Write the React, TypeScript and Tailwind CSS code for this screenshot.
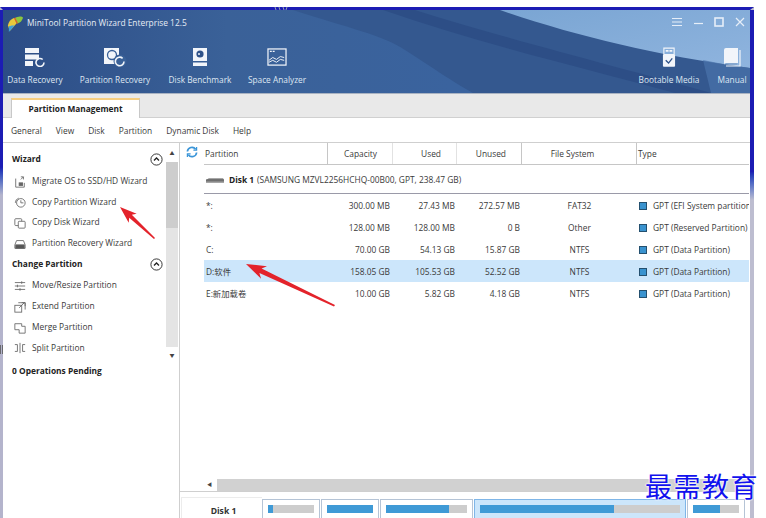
import React from "react";

const font = { fontFamily: '"Open Sans","Noto Sans CJK SC",sans-serif' };

const Ico = ({ d }: { d: React.ReactNode }) => (
  <svg width="12" height="12" viewBox="0 0 14 14" fill="none" stroke="#666" strokeWidth="1" className="shrink-0">{d}</svg>
);

const Chevron = () => (
  <svg width="13" height="13" viewBox="0 0 13 13" fill="none" stroke="#222" className="shrink-0">
    <circle cx="6.5" cy="6.5" r="5.6" strokeWidth="0.9" />
    <path d="M4 7.5l2.5-2.5 2.5 2.5" strokeWidth="1.3" />
  </svg>
);

const wizard: [string, React.ReactNode, string][] = [
  ["Migrate OS to SSD/HD Wizard", <><path d="M2 3v10h10V8" /><path d="M8 1l3 0 0 3M11 1L8 4" /><rect x="6" y="8" width="4" height="3" fill="#666" /></>, "h-[21px]"],
  ["Copy Partition Wizard", <><circle cx="8" cy="8" r="5" /><path d="M8 5v3h3M1.500 8a6 6 0 0 1 4-5.500" /></>, "h-[20px]"],
  ["Copy Disk Wizard", <><rect x="1" y="2" width="8" height="8" rx="1" /><rect x="5" y="5" width="8" height="8" rx="1" fill="#fff" /></>, "h-[21px]"],
  ["Partition Recovery Wizard", <><path d="M3 3h8l2 5v4H1V8z" /><rect x="2" y="8" width="10" height="4" fill="#555" /></>, "h-[21px]"],
];
const change: [string, React.ReactNode, string][] = [
  ["Move/Resize Partition", <><path d="M1 3h12M1 7h12M1 11h12" /><path d="M9 1.5v3M4 5.5v3M7 9.5v3" /></>, "h-[21px]"],
  ["Extend Partition", <><rect x="1" y="5" width="8" height="8" /><path d="M5 2h8v8M6 8l6-6M9 2h4v4" /></>, "h-[21px]"],
  ["Merge Partition", <path d="M1 2h8v3h4v8H6v-4H1z" />, "h-[21px]"],
  ["Split Partition", <><path d="M7 1v12" /><path d="M1 3h3v8H1M13 3h-3v8h3" /></>, "h-[20px]"],
];

const rows = [
  ["*:", "300.00 MB", "27.43 MB", "272.57 MB", "FAT32", "GPT (EFI System partition)"],
  ["*:", "128.00 MB", "128.00 MB", "0 B", "Other", "GPT (Reserved Partition)"],
  ["C:", "70.00 GB", "54.13 GB", "15.87 GB", "NTFS", "GPT (Data Partition)"],
  ["D:软件", "158.05 GB", "105.53 GB", "52.52 GB", "NTFS", "GPT (Data Partition)"],
  ["E:新加载卷", "10.00 GB", "5.82 GB", "4.18 GB", "NTFS", "GPT (Data Partition)"],
];

const Tool = ({ label, icon, w }: { label: string; icon: React.ReactNode; w: string }) => (
  <div className={`flex flex-col items-center shrink-0 ${w}`}>
    <div className="h-[26px] flex items-center justify-center">{icon}</div>
    <div className="mt-[4px] text-[8.3px] leading-[12px] text-[#dfe7f2] whitespace-nowrap">{label}</div>
  </div>
);

const MapBox = ({ w, ml, fill, sel }: { w: string; ml: string; fill: string; sel?: boolean }) => (
  <div className={`h-[22px] mt-[2px] shrink-0 pt-[5px] px-[5px] border ${w} ${ml} ${sel ? "border-[#7fb6e8] bg-[#cce6fb]" : "border-[#b5c4d6] bg-white"}`}>
    <div className="h-[8px] bg-[#cdcdcd]">
      <div className={`h-full bg-[#3f9ad6] ${fill}`} />
    </div>
  </div>
);

export default function App() {
  return (
    <div className="relative w-[766px] h-[518px] overflow-hidden bg-white pt-[7px] text-[#3a3a3a]" style={font}>
      <div className="w-[754px] h-[511px] flex flex-col border-t-[3px] border-l-[3px] border-r-[4px] border-t-[#1c1cb4] border-l-[#b4b4cc] border-r-[#bdbdd0] relative">
        {/* upper parts of the blue side borders */}
        <div className="absolute -left-[3px] top-0 w-[3px] h-[185px] bg-gradient-to-b from-[#1c1cb4] from-85% to-[#b4b4cc]" />
        <div className="absolute -right-[4px] top-0 w-[4px] h-[190px] bg-gradient-to-b from-[#1c1cb4] from-85% to-[#bdbdd0]" />

        {/* header */}
        <div className="relative h-[83px] shrink-0 overflow-hidden bg-[#34588f]">
          <svg className="absolute inset-0" width="747" height="83" viewBox="0 0 747 83">
            <defs>
              <linearGradient id="hg" x1="0" y1="0" x2="1" y2="0">
                <stop offset="0" stopColor="#2c4d86" />
                <stop offset="0.3" stopColor="#3a6198" />
                <stop offset="0.6" stopColor="#3a639e" />
              </linearGradient>
              <linearGradient id="lg" x1="0" y1="0" x2="1" y2="1">
                <stop offset="0" stopColor="#7aa5d3" />
                <stop offset="1" stopColor="#8fb4de" />
              </linearGradient>
            </defs>
            <rect width="747" height="83" fill="url(#hg)" />
            <path d="M290 0C345 18 380 25 402 40C430 58 450 72 470 83H747V0z" fill="#34588f" />
            <path d="M380 0C480 35 590 60 672 83H708C620 58 500 28 412 0z" fill="#2d4e86" />
            <path d="M497 0C570 25 650 45 747 58V0z" fill="url(#lg)" />
            <path d="M700 50C715 53 730 56 747 58V83H708z" fill="#4a73ab" opacity="0.7" />
          </svg>
          <div className="relative flex items-center h-[26px] pl-[4px]">
            <svg width="17" height="17" viewBox="0 0 18 18" className="shrink-0">
              <path d="M1 11C2 5 7 2 11 3l-1 6-7 8z" fill="#e8c93c" />
              <path d="M8 4c3-3 8-3 9-1-1 3-3 6-7 6z" fill="#8cc63f" />
              <path d="M2 12c2-1 4-1 6-1l-6 7z" fill="#3fa0d8" />
              <path d="M8 3l3 6" stroke="#e05a2b" strokeWidth="1.4" />
            </svg>
            <span className="ml-[3px] text-[8.4px] leading-[12px] text-[#e6ecf5] whitespace-nowrap">MiniTool Partition Wizard Enterprise 12.5</span>
            <div className="ml-auto flex items-center gap-[11px] pr-[5px] -mt-[2px]">
              <svg width="10" height="10" viewBox="0 0 10 10" stroke="#e6eef8" strokeWidth="1"><path d="M0 1.5h10M0 5h10M0 8.500h10" /></svg>
              <svg width="10" height="10" viewBox="0 0 10 10" stroke="#e6eef8" strokeWidth="1.2"><path d="M1 6.500h9" /></svg>
              <svg width="10" height="10" viewBox="0 0 10 10" fill="none" stroke="#e6eef8" strokeWidth="1.6"><rect x="1" y="1" width="8" height="8" /></svg>
              <svg width="10" height="10" viewBox="0 0 10 10" stroke="#e6eef8" strokeWidth="1.2"><path d="M1 1l8 8M9 1l-8 8" /></svg>
            </div>
          </div>
          <div className="relative flex pl-[2px] mt-[8px]">
            <Tool label="Data Recovery" w="w-[60px]" icon={
              <svg width="22" height="20" viewBox="0 0 22 20">
                <path d="M1 1h14v5H1zM1 7.500h14v5H1zM1 14h8v5H1z" fill="#f2f5fa" />
                <path d="M20 15.500a4 4 0 1 1-1.300-3" fill="none" stroke="#f2f5fa" strokeWidth="1.6" />
              </svg>} />
            <Tool label="Partition Recovery" w="w-[80px] ml-[10px]" icon={
              <svg width="24" height="20" viewBox="0 0 24 20">
                <path d="M1 1h15v16H1z" fill="#f2f5fa" />
                <circle cx="9" cy="8" r="4.500" fill="none" stroke="#3a6198" strokeWidth="1.3" />
                <circle cx="17" cy="14" r="6.500" fill="#3a6198" />
                <path d="M21 14.500a4.300 4.300 0 1 1-1.400-3.200" fill="none" stroke="#f2f5fa" strokeWidth="1.6" />
              </svg>} />
            <Tool label="Disk Benchmark" w="w-[70px] ml-[10px]" icon={
              <svg width="16" height="20" viewBox="0 0 16 20">
                <path d="M1 1h14v13H1z" fill="#f2f5fa" />
                <circle cx="8" cy="7" r="3.600" fill="#2f5289" />
                <circle cx="7" cy="7" r="1" fill="#f2f5fa" />
                <path d="M1 15.500h14V19H1z" fill="#f2f5fa" />
              </svg>} />
            <Tool label="Space Analyzer" w="w-[70px] ml-[7px]" icon={
              <svg width="20" height="19" viewBox="0 0 21 20" fill="none">
                <rect x="1" y="1" width="19" height="17" stroke="#f2f5fa" strokeWidth="1.3" />
                <path d="M3 3.500h2M6 3.500h2" stroke="#f2f5fa" strokeWidth="1.2" />
                <path d="M2 13l4-3 4 2 4-3 4 1M2 15l4-2 4 2 4-3 4 1" stroke="#f2f5fa" strokeWidth="1" />
              </svg>} />
            <div className="ml-auto flex">
              <Tool label="Bootable Media" w="w-[66px]" icon={
                <svg width="14" height="20" viewBox="0 0 15 21">
                  <path d="M2 1h11v7H2z" fill="none" stroke="#f2f5fa" strokeWidth="1.2" />
                  <path d="M4 3h3v2H4zM8 3h3v2H8z" fill="#f2f5fa" />
                  <path d="M1 8h13v12a1 1 0 0 1-1 1H2a1 1 0 0 1-1-1z" fill="#f2f5fa" />
                  <path d="M4 14l3 3 4-5" fill="none" stroke="#2f5289" strokeWidth="1.4" />
                </svg>} />
              <Tool label="Manual" w="w-[36px] ml-[12px]" icon={
                <svg width="18" height="20" viewBox="0 0 18 20">
                  <path d="M1 3a2 2 0 0 1 2-2h12v15H3a2 2 0 0 0-2 2z" fill="#f2f5fa" />
                  <path d="M17 3v16H3" fill="none" stroke="#f2f5fa" strokeWidth="1.200" />
                  <path d="M3 17h11" stroke="#7b97bd" strokeWidth="0.8" />
                </svg>} />
            </div>
          </div>
        </div>

        {/* tabs */}
        <div className="h-[25px] shrink-0 bg-[#e9e9e9] border-t border-t-[#a9b3c2] border-b border-b-[#d0d0d0] pl-[8px] pt-[4px]">
          <div className="w-[129px] h-[20px] bg-white border-x border-x-[#c8c8c8] border-t-[2px] border-t-[#f6ce80] text-center text-[8.3px] font-bold leading-[17px] text-[#222]">
            Partition Management
          </div>
        </div>

        {/* menu */}
        <div className="h-[25px] shrink-0 flex items-center pl-[8px] pt-[2px] gap-[14px] text-[8.4px] border-b border-b-[#cfcfcf]">
          <span>General</span><span>View</span><span>Disk</span><span>Partition</span><span>Dynamic Disk</span><span>Help</span>
        </div>

        {/* body */}
        <div className="flex flex-1 min-h-0">
          {/* sidebar */}
          <div className="w-[177px] shrink-0 flex border-r border-r-[#cfcfcf]">
            <div className="w-[163px] shrink-0 pl-[9px] pr-[3px] pt-[8px] text-[8.4px] whitespace-nowrap">
              <div className="h-[17px] mb-[3px] flex items-center justify-between font-bold text-[#222]"><span>Wizard</span><Chevron /></div>
              {wizard.map(([t, d, h]) => (
                <div key={t} className={`flex items-center gap-[6px] pl-[2px] ${h}`}>
                  <Ico d={d} /><span>{t}</span>
                </div>
              ))}
              <div className="h-[20px] mb-[1px] flex items-center justify-between font-bold text-[#222]"><span>Change Partition</span><Chevron /></div>
              {change.map(([t, d, h]) => (
                <div key={t} className={`flex items-center gap-[6px] pl-[2px] ${h}`}>
                  <Ico d={d} /><span>{t}</span>
                </div>
              ))}
              <div className="mt-[3px] font-bold leading-[20px] text-[#222]">0 Operations Pending</div>
            </div>
            <div className="w-[12px] h-[224px] shrink-0 mt-[2px] flex flex-col items-center">
              <div className="h-[17px] flex items-center text-[5px] leading-none text-[#444]">▲</div>
              <div className="w-full h-[66px] bg-[#cdcdcd]" />
              <div className="w-full h-[119px] bg-[#e4e4e4] bg-[radial-gradient(#c4c4c4_0.6px,transparent_0.7px)] bg-[length:2px_2px]" />
              <div className="h-[17px] flex items-center text-[5px] leading-none text-[#444]">▼</div>
            </div>
          </div>

          {/* main */}
          <div className="flex-1 min-w-0 flex flex-col">
            <div className="flex-1 min-h-0 flex pr-[1px]">
              <div className="w-[24px] shrink-0 pl-[6px] pt-[3px]">
                <svg width="12" height="12" viewBox="0 0 13 13" fill="none" stroke="#3a95d8" strokeWidth="1.8">
                  <path d="M1.500 6A5 5 0 0 1 10.500 3.500" /><path d="M11.500 7A5 5 0 0 1 2.500 9.500" />
                  <path d="M11.500 1v3.500H8M1.500 12V8.500H5" strokeWidth="1.300" />
                </svg>
              </div>
              <div className="flex-1 min-w-0 overflow-hidden">
                <div className="flex h-[22px] border-b border-b-[#c6c6c6] text-[8.4px] leading-[22px]">
                  <div className="w-[124px] pl-[1px] border-r border-r-[#c6c6c6]">Partition</div>
                  <div className="w-[65px] pr-[15px] text-right border-r border-r-[#e2e2e2]">Capacity</div>
                  <div className="w-[64px] pr-[15px] text-right border-r border-r-[#e2e2e2]">Used</div>
                  <div className="w-[65px] pr-[15px] text-right border-r border-r-[#c6c6c6]">Unused</div>
                  <div className="w-[115px] pr-[13px] text-center border-r border-r-[#c6c6c6]">File System</div>
                  <div className="flex-1 pl-[1px]">Type</div>
                </div>
                <div className="h-[29px] flex items-center pl-[2px] pt-[2px] border-b border-b-[#9a9aa8] text-[8.4px] whitespace-nowrap">
                  <svg width="18" height="7" viewBox="0 0 19 7" className="mr-[5px]"><path d="M0 3l3-2h15l1 2v3H0z" fill="#8a8a8a" /><path d="M0 3h19" stroke="#555" /></svg>
                  <span className="font-bold text-[#222]">Disk 1</span>
                  <span className="ml-[3px]">(SAMSUNG MZVL2256HCHQ-00B00, GPT, 238.47 GB)</span>
                </div>
                {rows.map((r) => (
                  <div key={r[0] + r[1]} className={`flex h-[22px] pt-[2px] items-center text-[8.4px] whitespace-nowrap ${r[0].startsWith("D") ? "bg-[#cce6fb]" : ""}`}>
                    <div className="w-[124px] pl-[2px]">{r[0]}</div>
                    <div className="w-[65px] pr-[3px] text-right">{r[1]}</div>
                    <div className="w-[64px] pr-[2px] text-right">{r[2]}</div>
                    <div className="w-[65px] pr-[2px] text-right">{r[3]}</div>
                    <div className="w-[115px] text-center">{r[4]}</div>
                    <div className="flex-1 min-w-0 pl-[2px] flex items-center overflow-hidden">
                      <span className="w-[8px] h-[8px] bg-[#3a93cf] border border-[#24506f] shrink-0" />
                      <span className="ml-[6px]">{r[5]}</span>
                    </div>
                  </div>
                ))}
              </div>
            </div>
            {/* horizontal scrollbar */}
            <div className="h-[13px] shrink-0 flex border-b border-b-[#cfcfcf]">
              <div className="w-[37px] flex items-center justify-end pr-[5px] text-[5px] text-[#444]">◀</div>
              <div className="flex-1 bg-[#d1d1d1]" />
            </div>
            {/* disk map */}
            <div className="h-[26px] shrink-0 flex pt-[5px] pl-[1px]">
              <div className="w-[81px] shrink-0 pl-[3px] text-center text-[8.6px] font-bold leading-[26px] text-[#333] border-l border-t border-[#ececec]">Disk 1</div>
              <MapBox w="w-[58px]" ml="" fill="w-[10%]" />
              <MapBox w="w-[58px]" ml="ml-[1px]" fill="w-full" />
              <MapBox w="w-[93px]" ml="ml-[1px]" fill="w-[78%]" />
              <MapBox w="w-[212px]" ml="ml-[1px]" fill="w-[67%]" sel />
              <MapBox w="w-[58px]" ml="ml-[1px]" fill="w-[58%]" />
            </div>
          </div>
        </div>
      </div>

      {/* annotation arrows and scan marks */}
      <svg className="absolute left-0 top-0 pointer-events-none" width="766" height="518" viewBox="0 0 766 518">
        <path d="M120 207L136.700 213.800L131.800 214.800L155 238L154 239L129.200 217.800L128.700 222.800Z" fill="#e3232b" />
        <path d="M246 264L267 266.200L261.600 268.500L335 305L334 306.500L259.400 273.100L261.100 278.800Z" fill="#e3232b" />
        <path d="M275 7l1 3M279 7l1 3M283 7l1 3M287 7l-1 3" stroke="#8f9bb3" strokeWidth="1" />
        <path d="M0.500 345v9M2.500 345v9" stroke="#555" strokeWidth="0.8" />
      </svg>

      {/* watermark */}
      <div className="absolute left-[645px] top-[471px] text-[#1111ee] text-[27px] leading-[30px] tracking-[1.500px] whitespace-nowrap [text-shadow:0_0_2px_#fff,0_0_2px_#fff,0_0_2px_#fff]" style={{ fontFamily: '"Noto Sans CJK SC",sans-serif' }}>
        最需教育
      </div>
    </div>
  );
}
